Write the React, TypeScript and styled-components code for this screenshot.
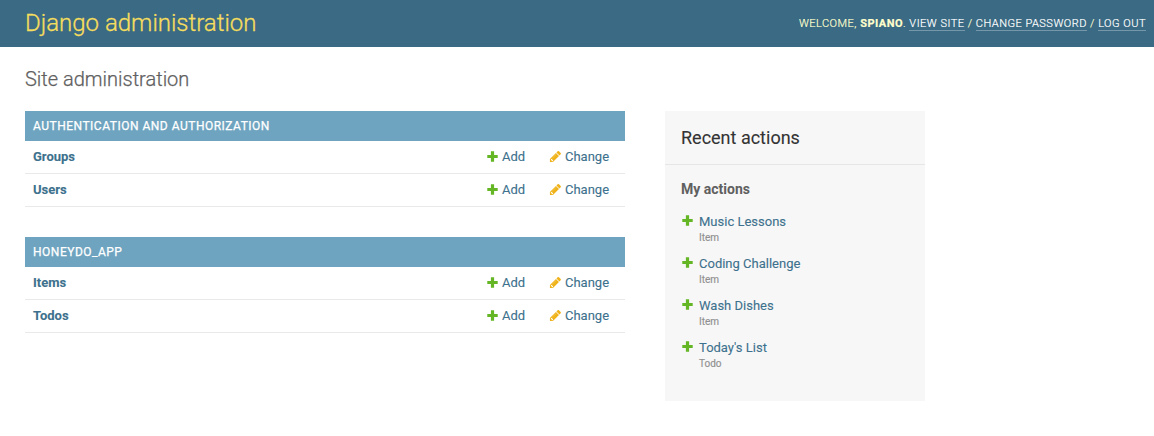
import React from 'react';
import styled, { createGlobalStyle } from 'styled-components';

const GlobalStyle = createGlobalStyle`
  * { box-sizing: border-box; }
  body { margin: 0; background: #fff; color: #333; font: 14px Roboto, "Liberation Sans", sans-serif; -webkit-font-smoothing: antialiased; }
  h1, h2, h3, ul { margin: 0; padding: 0; list-style: none; }
  a { text-decoration: none; }
`;

const Header = styled.header`
  display: flex; align-items: center; justify-content: space-between;
  height: 47px; padding: 0 8px 0 25px; background: #3a6a84; color: #ffc;
`;
const Brand = styled.h1`
  padding-bottom: 2px; font-size: 24px; font-weight: 300; line-height: 44px; color: #f5dd5d;
  -webkit-text-stroke: 0.3px;
`;
const UserTools = styled.div`
  font-size: 11px; font-weight: 300; letter-spacing: 0.5px; text-transform: uppercase; line-height: 15px;
  -webkit-text-stroke: 0.2px;
  strong { font-weight: 700; }
`;
const ToolLink = styled.a`color: #fff; border-bottom: 1px solid rgba(255,255,255,.3);`;
const Main = styled.main`padding: 20px 25px;`;
const Title = styled.h1`
  font-size: 20px; font-weight: 300; line-height: 24px; color: #606060; margin-bottom: 20px;
  -webkit-text-stroke: 0.25px;
`;
const Columns = styled.div`display: flex; gap: 40px; align-items: flex-start;`;
const Apps = styled.div`width: 600px; display: flex; flex-direction: column; gap: 30px;`;
const Caption = styled.h2`
  height: 30px; padding: 0 8px; line-height: 30px; background: #6ea4bf; color: #fff;
  font-size: 12px; font-weight: 400; letter-spacing: 0.5px; text-transform: uppercase;
  -webkit-text-stroke: 0.25px;
`;
const Row = styled.div`
  display: flex; align-items: center; height: 33px; padding: 0 8px 2px; border-bottom: 1px solid #e9e9e9; font-size: 13px;
`;
const ModelLink = styled.a`flex: 1; color: #3d718d; font-weight: 700; -webkit-text-stroke: 0.1px;`;
const ActionLink = styled.a<{ $width: number }>`
  display: flex; align-items: center; width: ${p => p.$width}px; color: #3d718d;
  -webkit-text-stroke: 0.1px;
  svg { margin-right: 3px; }
`;
const Sidebar = styled.aside`width: 260px; height: 290px; background: #f7f7f7;`;
const SideTitle = styled.h2`
  height: 54px; padding: 0 16px; line-height: 53px; border-bottom: 1px solid #e6e6e6;
  font-size: 18px; font-weight: 400; color: #333; -webkit-text-stroke: 0.1px;
`;
const SideSub = styled.h3`padding: 16px 16px 0; font-size: 14px; line-height: 17px; font-weight: 700; color: #606060;`;
const Recent = styled.ul`padding: 15px 16px 0;`;
const Entry = styled.li`
  display: flex; height: 42px; font-size: 13px; line-height: 17px;
  svg { margin: 1px 5px 0 0; }
  a { display: block; color: #3d718d; -webkit-text-stroke: 0.1px; }
`;
const Kind = styled.span`display: block; font-size: 10px; line-height: 15px; color: #909090; -webkit-text-stroke: 0.15px;`;

const Plus = () => (
  <svg width="13" height="13" viewBox="0 0 13 13" fill="#64b624">
    <path d="M4.9 1.3h3.2v3.6h3.6v3.2H8.1v3.6H4.9V8.1H1.3V4.9h3.6z" />
  </svg>
);
const Pencil = () => (
  <svg width="13" height="13" viewBox="0 0 1792 1792" fill="#efb219">
    <path d="M491 1536l91-91-235-235-91 91v107h128v128h107zm469-1120l416 416-832 832h-416v-416zm683 96q0 53-37 90l-166 166-416-416 166-165q36-38 90-38 53 0 91 38l235 234q37 39 37 91z" />
    <path d="M1014 608q0-22-22-22-10 0-17 7l-542 542q-7 7-7 17 0 22 22 22 10 0 17-7l542-542q7-7 7-17z" fill="#f8d77c" />
  </svg>
);

const apps = [
  { name: 'Authentication and Authorization', models: ['Groups', 'Users'] },
  { name: 'Honeydo_App', models: ['Items', 'Todos'] },
];
const recent = [
  ['Music Lessons', 'Item'],
  ['Coding Challenge', 'Item'],
  ['Wash Dishes', 'Item'],
  ["Today's List", 'Todo'],
];

export default function App() {
  return (
    <>
      <GlobalStyle />
      <Header>
        <Brand>Django administration</Brand>
        <UserTools>
          Welcome, <strong>spiano</strong>. <ToolLink>View site</ToolLink> / <ToolLink>Change password</ToolLink> / <ToolLink>Log out</ToolLink>
        </UserTools>
      </Header>
      <Main>
        <Title>Site administration</Title>
        <Columns>
          <Apps>
            {apps.map(app => (
              <section key={app.name}>
                <Caption>{app.name}</Caption>
                {app.models.map(model => (
                  <Row key={model}>
                    <ModelLink>{model}</ModelLink>
                    <ActionLink $width={63}><Plus />Add</ActionLink>
                    <ActionLink $width={68}><Pencil />Change</ActionLink>
                  </Row>
                ))}
              </section>
            ))}
          </Apps>
          <Sidebar>
            <SideTitle>Recent actions</SideTitle>
            <SideSub>My actions</SideSub>
            <Recent>
              {recent.map(([name, kind]) => (
                <Entry key={name}><Plus /><div><a>{name}</a><Kind>{kind}</Kind></div></Entry>
              ))}
            </Recent>
          </Sidebar>
        </Columns>
      </Main>
    </>
  );
}
